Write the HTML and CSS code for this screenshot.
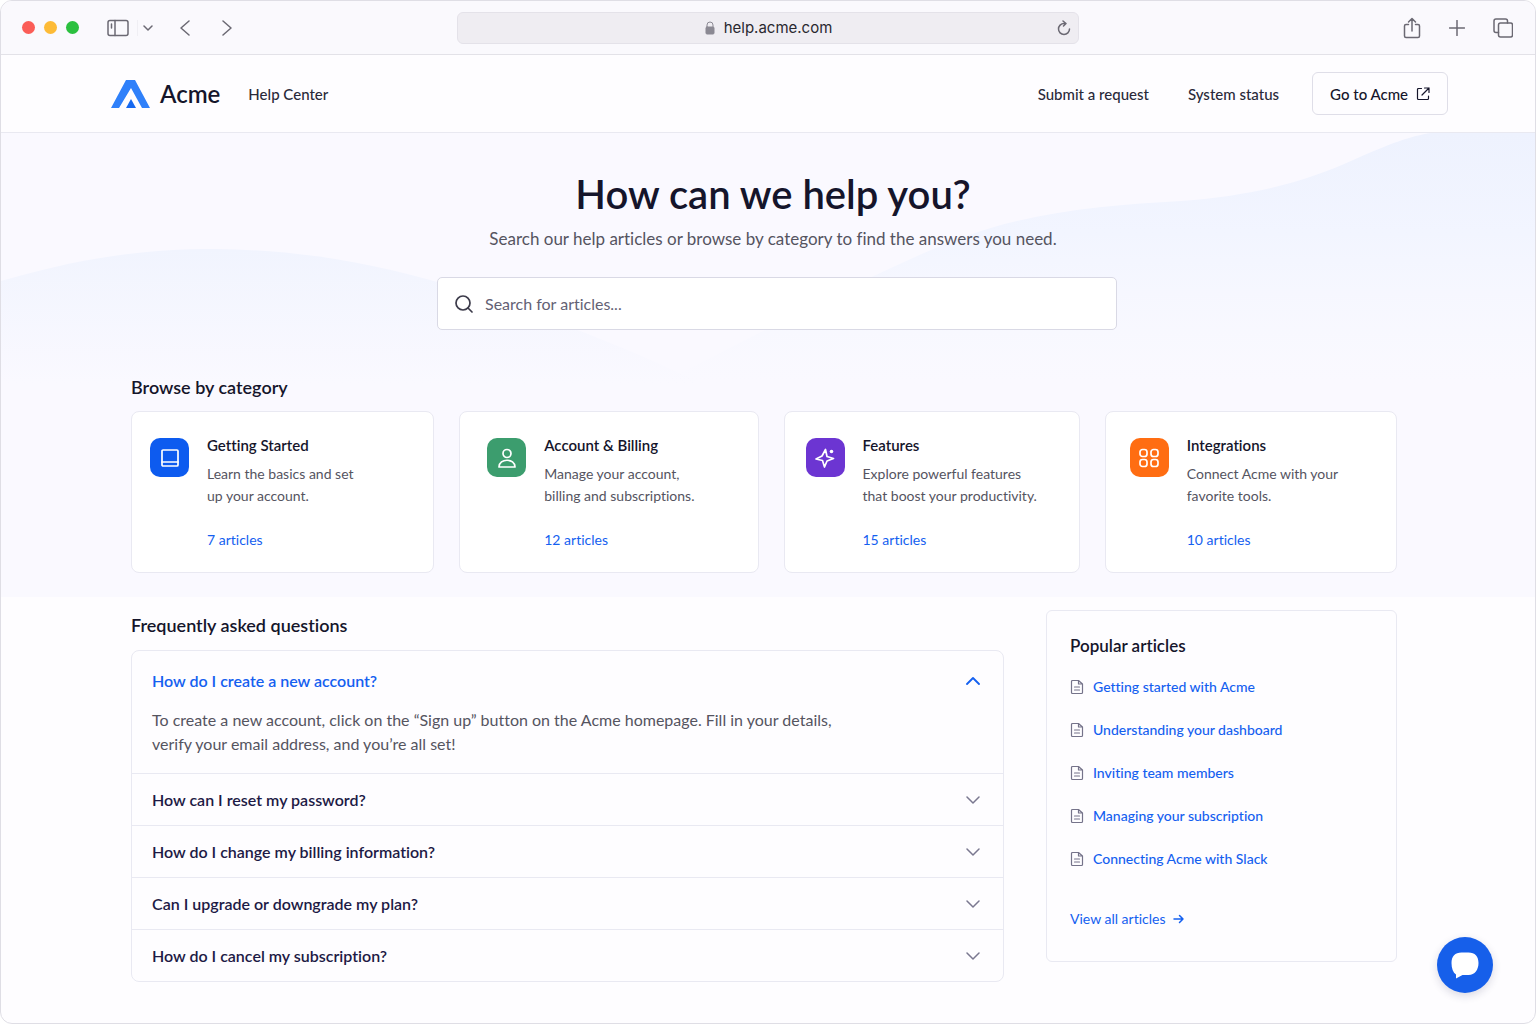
FILE: index.html
```html
<!DOCTYPE html>
<html lang="en">
<head>
<meta charset="utf-8">
<meta name="viewport" content="width=device-width, initial-scale=1">
<title>Acme Help Center</title>
<link rel="stylesheet" href="styles.css">
</head>
<body>
<svg class="sprite" aria-hidden="true">
  <symbol id="i-doc" viewBox="0 0 14 16"><path d="M2.500 1.500H8.500L12.500 5V13.500a1 1 0 0 1-1 1H2.500a1 1 0 0 1-1-1V2.500a1 1 0 0 1 1-1zM8.500 1.500V5H12.500M4.500 8H9.500M4.500 11H9.500"/></symbol>
  <symbol id="i-down" viewBox="0 0 14 14"><path d="M1 4l6 6 6-6"/></symbol>
  <symbol id="i-up" viewBox="0 0 14 14"><path d="M1 10l6-6 6 6"/></symbol>
</svg>
<div class="window">
  <div class="toolbar">
    <div class="toolbar-left">
      <div class="lights"><span class="light light-red"></span><span class="light light-yellow"></span><span class="light light-green"></span></div>
      <div class="sidebar-tools">
        <button class="tool" aria-label="Show sidebar"><svg width="22" height="18" viewBox="0 0 22 18"><rect x="1" y="1.500" width="20" height="15" rx="2"/><path d="M8 1.500v15M4.500 5v4"/></svg></button>
        <button class="tool tool-menu" aria-label="Tab groups"><svg width="10" height="8" viewBox="0 0 10 8"><path d="M1 2l4 4 4-4"/></svg></button>
      </div>
      <div class="history">
        <button class="tool" aria-label="Back"><svg width="10" height="16" viewBox="0 0 10 16"><path d="M9 1L1 8l8 7"/></svg></button>
        <button class="tool" aria-label="Forward"><svg width="10" height="16" viewBox="0 0 10 16"><path d="M1 1l8 7-8 7"/></svg></button>
      </div>
    </div>
    <div class="address">
      <span class="address-text"><svg width="10" height="14" viewBox="0 0 10 14"><rect x="1" y="6" width="8" height="7" rx="1" fill="#8b8993" stroke="#8b8993"/><path d="M2 7V4a3 3 0 0 1 6 0v3" fill="none" stroke="#8b8993"/></svg>help.acme.com</span>
      <button class="tool" aria-label="Reload"><svg width="14" height="16" viewBox="0 0 14 16"><path d="M8.500 3.500H7a5.500 5.500 0 1 0 5.500 5.500M6 1l3 2.500L6.500 6"/></svg></button>
    </div>
    <div class="toolbar-right">
      <button class="tool" aria-label="Share"><svg width="18" height="22" viewBox="0 0 18 22"><path d="M5.500 7.500H3a1.500 1.500 0 0 0-1.500 1.500V19A1.500 1.500 0 0 0 3 20.500H15a1.500 1.500 0 0 0 1.500-1.500V9A1.500 1.500 0 0 0 15 7.500H12.500M9 14V1.500M5.500 5L9 1.500 12.500 5"/></svg></button>
      <button class="tool" aria-label="New tab"><svg width="16" height="16" viewBox="0 0 16 16"><path d="M8 .5v15M.5 8h15"/></svg></button>
      <button class="tool" aria-label="Show all tabs"><svg width="20" height="20" viewBox="0 0 20 20"><rect x="5.500" y="5" width="14" height="14" rx="2"/><path d="M5.500 14.500H3a2 2 0 0 1-2-2V3a2 2 0 0 1 2-2h9.500a2 2 0 0 1 2 2v2"/></svg></button>
    </div>
  </div>

  <header class="site-header">
    <a class="brand" href="#"><svg width="40" height="28" viewBox="0 0 40 28"><path d="M15 0h9L39 28h-8L20 8 8 28H0z" fill="#2f80fa"/><path d="M20 19l5 9H15z" fill="#1769f0"/></svg>Acme</a>
    <a class="nav-link" href="#">Help Center</a>
    <nav class="site-nav">
      <a class="nav-link" href="#">Submit a request</a>
      <a class="nav-link" href="#">System status</a>
      <a class="go-button" href="#">Go to Acme<svg width="14" height="14" viewBox="0 0 14 14"><path d="M5.500 1.500H2.500a1 1 0 0 0-1 1v9a1 1 0 0 0 1 1h9a1 1 0 0 0 1-1V9M8.500 1H13v4.500M13 1L6 8"/></svg></a>
    </nav>
  </header>

  <main>
    <div class="hero">
      <svg class="waves" viewBox="0 0 1534 464" preserveAspectRatio="none" aria-hidden="true">
        <defs>
          <linearGradient id="fade-left" gradientUnits="userSpaceOnUse" x1="0" y1="116" x2="0" y2="250"><stop offset="0" stop-color="#f1f4fe"/><stop offset="1" stop-color="#f1f4fe" stop-opacity="0"/></linearGradient>
          <linearGradient id="fade-right" gradientUnits="userSpaceOnUse" x1="0" y1="0" x2="0" y2="250"><stop offset="0" stop-color="#eef2fe"/><stop offset=".4" stop-color="#f2f5ff"/><stop offset="1" stop-color="#f5f7ff" stop-opacity="0"/></linearGradient>
        </defs>
        <path fill="url(#fade-left)" d="M0 148C90 122 150 116 215 116C300 117 370 130 440 150C540 180 640 220 720 260H0z"/>
        <path fill="url(#fade-right)" d="M640 260C760 200 880 135 960 105C1030 78 1110 72 1180 68C1260 62 1310 46 1350 28C1390 10 1410 3 1430 0H1534V260z"/>
      </svg>
      <div class="intro">
        <h1>How can we help you?</h1>
        <p>Search our help articles or browse by category to find the answers you need.</p>
      </div>
      <form class="search-row" role="search">
        <div class="search">
          <svg width="18" height="18" viewBox="0 0 18 18"><circle cx="8" cy="8" r="7"/><path d="M13 13l4 4"/></svg>
          <input type="search" aria-label="Search for articles" placeholder="Search for articles...">
        </div>
      </form>
      <section class="categories">
        <h2>Browse by category</h2>
        <div class="cards">
          <article class="card card-blue">
            <span class="badge"><svg width="18" height="18" viewBox="0 0 18 18"><rect x="1" y="1" width="16" height="16" rx="1"/><path d="M1 13h16"/></svg></span>
            <div class="card-text"><h3>Getting Started</h3><p>Learn the basics and set<br>up your account.</p><a href="#">7 articles</a></div>
          </article>
          <article class="card card-green">
            <span class="badge"><svg width="18" height="20" viewBox="0 0 18 20"><circle cx="9" cy="5.500" r="4"/><path d="M1 19c0-9 16-9 16 0z"/></svg></span>
            <div class="card-text"><h3>Account &amp; Billing</h3><p>Manage your account,<br>billing and subscriptions.</p><a href="#">12 articles</a></div>
          </article>
          <article class="card card-purple">
            <span class="badge"><svg width="20" height="20" viewBox="0 0 20 20"><path d="M10.500 1.500L12 8.500 18.500 10.500 12 13 9.500 19 7.500 12.500 1 11 7 8z"/><circle class="dot" cx="16.500" cy="3.500" r="1.800"/></svg></span>
            <div class="card-text"><h3>Features</h3><p>Explore powerful features<br>that boost your productivity.</p><a href="#">15 articles</a></div>
          </article>
          <article class="card card-orange">
            <span class="badge"><svg width="20" height="20" viewBox="0 0 20 20"><rect x="1" y="1.500" width="7" height="7" rx="2.500"/><rect x="12" y="1.500" width="7" height="7" rx="2.500"/><rect x="1" y="11.500" width="7" height="7" rx="2.500"/><rect x="12" y="11.500" width="7" height="7" rx="2.500"/></svg></span>
            <div class="card-text"><h3>Integrations</h3><p>Connect Acme with your<br>favorite tools.</p><a href="#">10 articles</a></div>
          </article>
        </div>
      </section>
    </div>

    <div class="lower">
      <section class="faq">
        <h2>Frequently asked questions</h2>
        <div class="faq-list">
          <div class="faq-item">
            <h3><button class="question question-open" aria-expanded="true" aria-controls="answer-1">How do I create a new account?<svg width="14" height="14"><use href="#i-up"/></svg></button></h3>
            <p class="answer" id="answer-1">To create a new account, click on the “Sign up” button on the Acme homepage. Fill in your details,<br>verify your email address, and you’re all set!</p>
          </div>
          <div class="faq-item"><h3><button class="question" aria-expanded="false">How can I reset my password?<svg width="14" height="14"><use href="#i-down"/></svg></button></h3></div>
          <div class="faq-item"><h3><button class="question" aria-expanded="false">How do I change my billing information?<svg width="14" height="14"><use href="#i-down"/></svg></button></h3></div>
          <div class="faq-item"><h3><button class="question" aria-expanded="false">Can I upgrade or downgrade my plan?<svg width="14" height="14"><use href="#i-down"/></svg></button></h3></div>
          <div class="faq-item"><h3><button class="question" aria-expanded="false">How do I cancel my subscription?<svg width="14" height="14"><use href="#i-down"/></svg></button></h3></div>
        </div>
      </section>
      <aside class="popular">
        <h2>Popular articles</h2>
        <ul>
          <li><svg width="14" height="16"><use href="#i-doc"/></svg><a href="#">Getting started with Acme</a></li>
          <li><svg width="14" height="16"><use href="#i-doc"/></svg><a href="#">Understanding your dashboard</a></li>
          <li><svg width="14" height="16"><use href="#i-doc"/></svg><a href="#">Inviting team members</a></li>
          <li><svg width="14" height="16"><use href="#i-doc"/></svg><a href="#">Managing your subscription</a></li>
          <li><svg width="14" height="16"><use href="#i-doc"/></svg><a href="#">Connecting Acme with Slack</a></li>
        </ul>
        <a class="view-all" href="#">View all articles<svg width="12" height="10" viewBox="0 0 12 10"><path d="M1 5h9M6.500 1.500L10 5l-3.500 3.500"/></svg></a>
      </aside>
    </div>
  </main>
  <button class="chat" aria-label="Open chat"><svg width="28" height="28" viewBox="0 0 28 28"><path d="M10.500 1.500h7C24 1.500 27.500 5.500 27.500 12S24 24 17.500 24H11.500L5 27.500V23.500C2 21.500.5 17.500.5 12 .5 5.500 4 1.500 10.500 1.500z"/></svg></button>
</div>
</body>
</html>
```
FILE: styles.css
```css
:root {
  --ink: #15152b;
  --text: #55545f;
  --blue: #1460f0;
  --line: #e9e9f2;
}
* { box-sizing: border-box; }
body {
  margin: 0;
  background: #fff;
  color: var(--ink);
  font-family: Lato, "Liberation Sans", sans-serif;
  font-size: 14px;
  line-height: 20px;
  font-variant-ligatures: none;
}
h1, h2, h3, p, ul { margin: 0; padding: 0; }
ul { list-style: none; }
a { color: var(--blue); text-decoration: none; }
button { font: inherit; font-variant-ligatures: inherit; color: inherit; background: none; border: 0; padding: 0; cursor: pointer; }
svg { display: block; flex: none; fill: none; stroke: currentColor; stroke-linecap: round; stroke-linejoin: round; }
.sprite { position: absolute; width: 0; height: 0; }

.window {
  min-height: 100vh;
  border: 1px solid #dfdee5;
  border-radius: 12px;
  background: #fefdff;
  overflow: hidden;
}

/* Browser toolbar */
.toolbar {
  display: grid;
  grid-template-columns: 1fr minmax(0, 622px) 1fr;
  align-items: center;
  height: 54px;
  padding: 0 22px 0 21px;
  background: #faf9fd;
  border-bottom: 1px solid #e3e2e8;
}
.toolbar-left, .toolbar-right, .lights, .history, .sidebar-tools { display: flex; align-items: center; }
.tool { display: flex; color: #6b6973; }
.tool svg { stroke-width: 1.5; }
.lights { gap: 9px; margin-right: 28px; }
.light { width: 13px; height: 13px; border-radius: 50%; }
.light-red { background: #fb5d57; }
.light-yellow { background: #fdbb37; }
.light-green { background: #2bc03f; }
.sidebar-tools { gap: 8px; margin-right: 27px; }
.tool-menu { padding: 4px 0 4px 5px; border-left: 1px solid #f0eff4; }
.history { gap: 32px; }
.address {
  display: flex;
  align-items: center;
  height: 32px;
  padding: 0 7px;
  border: 1px solid #e4e2e9;
  border-radius: 6px;
  background: #efedf2;
}
.address-text {
  flex: 1;
  display: flex;
  align-items: center;
  justify-content: center;
  gap: 9px;
  padding-left: 16px;
  color: #29282f;
  font: 15px/20px Inter, sans-serif;
}
.toolbar-right { justify-content: flex-end; gap: 28px; }

/* Site header */
.site-header {
  display: flex;
  align-items: center;
  gap: 28px;
  height: 78px;
  padding: 0 87px 0 110px;
  border-bottom: 1px solid #e9e9f1;
}
.brand {
  display: flex;
  align-items: center;
  gap: 9px;
  color: var(--ink);
  font-size: 24px;
  font-weight: 600;
  line-height: 28px;
}
.brand svg { stroke: none; }
.nav-link { color: #2a2939; font-size: 15px; font-weight: 500; }
.site-nav { display: flex; align-items: center; gap: 39px; margin-left: auto; }
.go-button {
  display: flex;
  align-items: center;
  gap: 8px;
  height: 43px;
  margin-left: -6px;
  padding: 0 17px;
  border: 1px solid #dfdee8;
  border-radius: 6px;
  color: var(--ink);
  font-size: 15px;
  font-weight: 500;
}
.go-button svg { stroke-width: 1.2; }

/* Hero */
.hero {
  position: relative;
  padding: 37px 138px 24px 130px;
  background: #faf9ff;
}
.waves { position: absolute; inset: 0; width: 100%; height: 100%; stroke: none; }
.intro, .search-row, .categories { position: relative; }
.intro { padding-left: 18px; text-align: center; }
.intro h1 { font-size: 40px; font-weight: 600; line-height: 48px; }
.intro p { padding-top: 9px; color: var(--text); font-size: 17px; line-height: 24px; }
.search-row { display: flex; justify-content: center; padding: 26px 0 0 26px; }
.search {
  display: flex;
  align-items: center;
  gap: 12px;
  width: 680px;
  height: 53px;
  padding: 0 17px;
  border: 1px solid #d9d9e5;
  border-radius: 5px;
  background: #fff;
  color: #3c3b4a;
}
.search svg { stroke-width: 1.7; }
.search input {
  flex: 1;
  min-width: 0;
  border: 0;
  outline: 0;
  padding: 0;
  background: none;
  color: var(--ink);
  font: 16px/24px Lato, "Liberation Sans", sans-serif;
  font-variant-ligatures: none;
}
.search input::placeholder { color: #636174; opacity: 1; }

h2 { font-size: 18px; font-weight: 600; line-height: 24px; }
.categories { padding-top: 45px; }
.cards {
  display: grid;
  grid-template-columns: 303fr 299fr 296fr 292fr;
  gap: 25px;
  margin-top: 12px;
}
.card {
  display: flex;
  gap: 18px;
  min-height: 162px;
  padding: 26px 19px 20px var(--inset);
  border: 1px solid var(--line);
  border-radius: 8px;
  background: #fff;
}
.card-blue { --inset: 18px; --tone: #0d5bef; }
.card-green { --inset: 27px; --tone: #3c9d6e; }
.card-purple { --inset: 21px; --tone: #6c35d2; }
.card-orange { --inset: 24px; --tone: #ff6d12; }
.badge {
  display: flex;
  align-items: center;
  justify-content: center;
  flex: none;
  width: 39px;
  height: 39px;
  border-radius: 10px;
  background: var(--tone);
  color: #fff;
}
.badge svg { stroke-width: 1.7; }
.dot { fill: #fff; stroke: none; }
.card-text { margin-top: -3px; }
.card h3 { font-size: 15px; font-weight: 600; line-height: 20px; }
.card p { margin: 8px 0 23px; color: var(--text); line-height: 22px; }
.card a { display: block; }

/* Questions and popular articles */
.lower {
  display: grid;
  grid-template-columns: 873fr 351fr;
  gap: 42px;
  align-items: start;
  padding: 13px 138px 40px 130px;
}
.faq { padding-top: 3px; }
.faq-list {
  margin-top: 13px;
  border: 1px solid var(--line);
  border-radius: 8px;
}
.faq-item + .faq-item { border-top: 1px solid var(--line); }
.faq h3 { font-size: 16px; font-weight: 600; line-height: 24px; }
.question {
  display: flex;
  align-items: center;
  justify-content: space-between;
  width: 100%;
  min-height: 51px;
  padding: 0 23px 0 20px;
  color: #1d1a45;
  text-align: left;
}
.question svg { color: #7a7890; stroke-width: 1.5; }
.question-open { min-height: 57px; padding-top: 3px; color: var(--blue); }
.question-open svg { color: var(--blue); stroke-width: 1.8; }
.answer { padding: 0 20px 17px; color: var(--text); font-size: 16px; line-height: 24px; }
.popular {
  min-height: 352px;
  padding: 23px;
  border: 1px solid var(--line);
  border-radius: 6px;
}
.popular h2 { font-size: 17px; }
.popular ul { display: grid; gap: 23px; margin-top: 19px; }
.popular li { display: flex; align-items: center; gap: 9px; color: #75738a; font-weight: 500; }
.popular li svg { stroke-width: 1.2; }
.view-all { display: flex; align-items: center; gap: 8px; margin-top: 40px; }
.view-all svg { stroke-width: 1.5; }

.chat {
  position: fixed;
  right: 43px;
  bottom: 31px;
  display: flex;
  align-items: center;
  justify-content: center;
  width: 56px;
  height: 56px;
  border-radius: 50%;
  background: #165fea;
  box-shadow: 0 3px 8px rgba(30, 30, 80, .16);
}
.chat svg { fill: #fff; stroke: none; }
```
